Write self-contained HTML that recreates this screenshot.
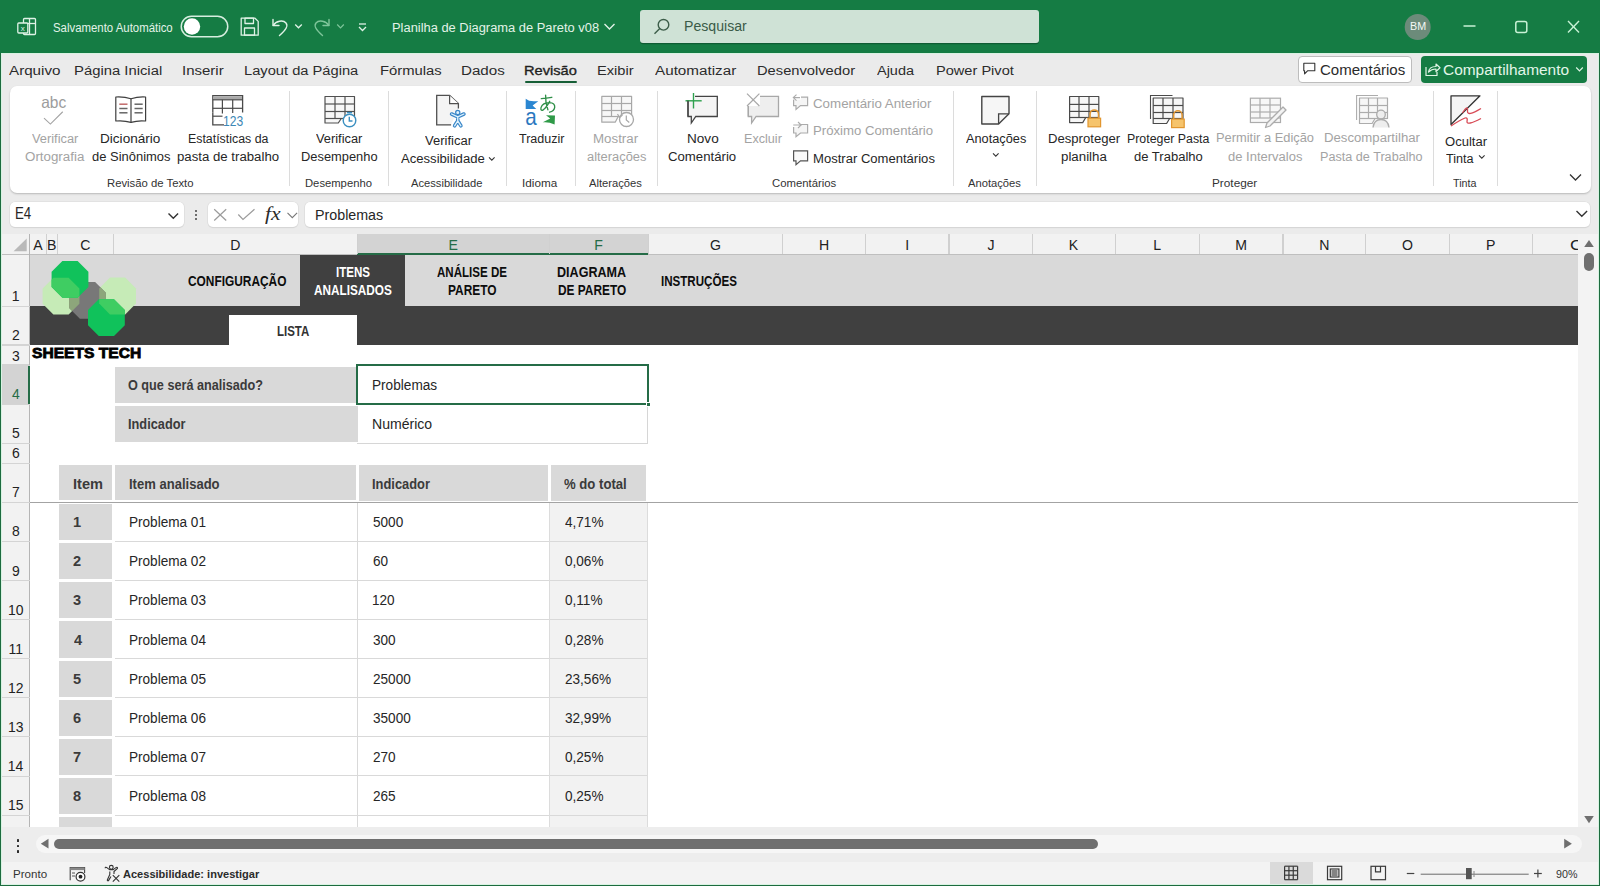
<!DOCTYPE html>
<html><head><meta charset="utf-8"><style>
html,body{margin:0;padding:0;width:1600px;height:886px;overflow:hidden;background:#ebebeb;}
body{position:relative;font-family:"Liberation Sans",sans-serif;}
.b{position:absolute;}
.t{position:absolute;white-space:pre;transform-origin:0 0;}
.s{position:absolute;overflow:visible;}
</style></head><body>
<div class="b" style="left:0.00px;top:0.00px;width:1600.00px;height:53.00px;background:#157c44;"></div>
<svg class="s" style="left:17px;top:17px;" width="20" height="20" viewBox="0 0 20 20"><g fill="none" stroke="#dff2e6" stroke-width="1.3">
      <rect x="6.5" y="1.5" width="12" height="16" rx="1"/><line x1="6.5" y1="6.5" x2="18.5" y2="6.5"/><line x1="12.5" y1="1.5" x2="12.5" y2="17.5"/>
    </g><rect x="0.8" y="6" width="10" height="10" rx="1" fill="#157c44" stroke="#dff2e6" stroke-width="1.3"/>
    <text x="5.8" y="14.3" font-family="Liberation Sans" font-size="8" fill="#dff2e6" text-anchor="middle">x</text></svg>
<span class="t" style="left:53.23px;top:21.96px;font-size:12.21px;line-height:12.21px;color:#e3f3e8;font-weight:normal;font-style:normal;font-family:'Liberation Sans',sans-serif;transform:scaleX(0.9336);">Salvamento Automático</span>
<svg class="s" style="left:180px;top:15px;" width="50" height="24" viewBox="0 0 50 24"><rect x="1.25" y="1.25" width="46.5" height="20.5" rx="10.25" fill="none" stroke="#d6eedf" stroke-width="1.5"/><circle cx="12" cy="11.5" r="8.2" fill="#ffffff"/></svg>
<svg class="s" style="left:240px;top:17px;" width="20" height="20" viewBox="0 0 20 20"><g fill="none" stroke="#dff2e6" stroke-width="1.3" stroke-linejoin="round">
      <path d="M1.2 1.2 H15 L18.2 4.4 V18.2 H1.2 Z"/><rect x="5" y="1.2" width="8.5" height="5.3"/><rect x="4.5" y="11" width="10" height="7.2"/></g></svg>
<svg class="s" style="left:271px;top:17px;" width="20" height="20" viewBox="0 0 20 20"><g fill="none" stroke="#dff2e6" stroke-width="1.4" stroke-linecap="round" stroke-linejoin="round">
      <path d="M2 2.5 V8.5 H8"/><path d="M2.3 8.3 C5 4 12 2.5 15 6 C17.5 9 15 13 8.5 18.5"/></g></svg>
<svg class="s" style="left:294px;top:23px;" width="10" height="7" viewBox="0 0 10 7"><path d="M1.2 1.5 L4.5 4.8 L7.8 1.5" fill="none" stroke="#dff2e6" stroke-width="1.3"/></svg>
<svg class="s" style="left:312px;top:17px;" width="20" height="20" viewBox="0 0 20 20"><g fill="none" stroke="#7ec59a" stroke-width="1.4" stroke-linecap="round" stroke-linejoin="round">
      <path d="M17 2.5 V8.5 H11"/><path d="M16.7 8.3 C14 4 7 2.5 4 6 C1.5 9 4 13 10.5 18.5"/></g></svg>
<svg class="s" style="left:336px;top:23px;" width="10" height="7" viewBox="0 0 10 7"><path d="M1.2 1.5 L4.5 4.8 L7.8 1.5" fill="none" stroke="#7ec59a" stroke-width="1.2"/></svg>
<svg class="s" style="left:357px;top:22px;" width="12" height="11" viewBox="0 0 12 11"><g fill="none" stroke="#dff2e6" stroke-width="1.3"><line x1="2" y1="2" x2="9" y2="2"/><path d="M2 5 L5.5 8.5 L9 5"/></g></svg>
<span class="t" style="left:392.44px;top:21.23px;font-size:13.08px;line-height:13.08px;color:#e3f3e8;font-weight:normal;font-style:normal;font-family:'Liberation Sans',sans-serif;transform:scaleX(0.9855);">Planilha de Diagrama de Pareto v08</span>
<svg class="s" style="left:603px;top:22px;" width="14" height="10" viewBox="0 0 14 10"><path d="M1.5 2 L6.5 7 L11.5 2" fill="none" stroke="#dff2e6" stroke-width="1.4"/></svg>
<div class="b" style="left:640.00px;top:10.00px;width:399.00px;height:33.00px;background:#cfe2d6;border-radius:3px;box-shadow:0 1.2px 0 #0f5c33;"></div>
<svg class="s" style="left:653px;top:18px;" width="18" height="18" viewBox="0 0 18 18"><g fill="none" stroke="#3c5d49" stroke-width="1.4"><circle cx="10.5" cy="6.8" r="5.3"/><line x1="6.8" y1="10.5" x2="1.5" y2="15.8"/></g></svg>
<span class="t" style="left:684.44px;top:18.87px;font-size:14.68px;line-height:14.68px;color:#3b5b48;font-weight:normal;font-style:normal;font-family:'Liberation Sans',sans-serif;transform:scaleX(0.9619);">Pesquisar</span>
<svg class="s" style="left:1404px;top:14px;" width="28" height="28" viewBox="0 0 28 28"><circle cx="13.7" cy="13" r="13" fill="#6c8b7a"/></svg>
<span class="t" style="left:1409.72px;top:22.11px;font-size:10.03px;line-height:10.03px;color:#f4f8f5;font-weight:normal;font-style:normal;font-family:'Liberation Sans',sans-serif;transform:scaleX(1.0731);">BM</span>
<svg class="s" style="left:1462px;top:24px;" width="16" height="4" viewBox="0 0 16 4"><line x1="1.5" y1="2" x2="13.5" y2="2" stroke="#c9f2d6" stroke-width="1.5"/></svg>
<svg class="s" style="left:1514px;top:20px;" width="16" height="15" viewBox="0 0 16 15"><rect x="1.8" y="1.5" width="11" height="11" rx="2" fill="none" stroke="#c9f2d6" stroke-width="1.5"/></svg>
<svg class="s" style="left:1566px;top:19px;" width="16" height="16" viewBox="0 0 16 16"><g stroke="#c9f2d6" stroke-width="1.4"><line x1="2" y1="2" x2="13" y2="13.5"/><line x1="13" y1="2" x2="2" y2="13.5"/></g></svg>
<div class="b" style="left:2.00px;top:53.00px;width:1596.00px;height:33.00px;background:#ebebeb;"></div>
<div class="b" style="left:2.00px;top:53.00px;width:1596.00px;height:1.00px;background:#d9f2e2;"></div>
<span class="t" style="left:8.77px;top:64.46px;font-size:13.52px;line-height:13.52px;color:#2b2b2b;font-weight:normal;font-style:normal;font-family:'Liberation Sans',sans-serif;transform:scaleX(1.1232);">Arquivo</span>
<span class="t" style="left:73.78px;top:64.46px;font-size:13.52px;line-height:13.52px;color:#2b2b2b;font-weight:normal;font-style:normal;font-family:'Liberation Sans',sans-serif;transform:scaleX(1.0969);">Página Inicial</span>
<span class="t" style="left:181.62px;top:64.46px;font-size:13.52px;line-height:13.52px;color:#2b2b2b;font-weight:normal;font-style:normal;font-family:'Liberation Sans',sans-serif;transform:scaleX(1.1083);">Inserir</span>
<span class="t" style="left:244.20px;top:64.46px;font-size:13.52px;line-height:13.52px;color:#2b2b2b;font-weight:normal;font-style:normal;font-family:'Liberation Sans',sans-serif;transform:scaleX(1.0863);">Layout da Página</span>
<span class="t" style="left:380.29px;top:64.46px;font-size:13.52px;line-height:13.52px;color:#2b2b2b;font-weight:normal;font-style:normal;font-family:'Liberation Sans',sans-serif;transform:scaleX(1.0960);">Fórmulas</span>
<span class="t" style="left:460.76px;top:64.46px;font-size:13.52px;line-height:13.52px;color:#2b2b2b;font-weight:normal;font-style:normal;font-family:'Liberation Sans',sans-serif;transform:scaleX(1.1209);">Dados</span>
<span class="t" style="left:596.60px;top:64.46px;font-size:13.52px;line-height:13.52px;color:#2b2b2b;font-weight:normal;font-style:normal;font-family:'Liberation Sans',sans-serif;transform:scaleX(1.0841);">Exibir</span>
<span class="t" style="left:654.67px;top:64.46px;font-size:13.52px;line-height:13.52px;color:#2b2b2b;font-weight:normal;font-style:normal;font-family:'Liberation Sans',sans-serif;transform:scaleX(1.1272);">Automatizar</span>
<span class="t" style="left:756.59px;top:64.46px;font-size:13.52px;line-height:13.52px;color:#2b2b2b;font-weight:normal;font-style:normal;font-family:'Liberation Sans',sans-serif;transform:scaleX(1.0874);">Desenvolvedor</span>
<span class="t" style="left:876.97px;top:64.46px;font-size:13.52px;line-height:13.52px;color:#2b2b2b;font-weight:normal;font-style:normal;font-family:'Liberation Sans',sans-serif;transform:scaleX(1.0709);">Ajuda</span>
<span class="t" style="left:935.80px;top:64.46px;font-size:13.52px;line-height:13.52px;color:#2b2b2b;font-weight:normal;font-style:normal;font-family:'Liberation Sans',sans-serif;transform:scaleX(1.0788);">Power Pivot</span>
<span class="t" style="left:523.80px;top:64.46px;font-size:13.52px;line-height:13.52px;color:#1f1f1f;font-weight:normal;font-style:normal;font-family:'Liberation Sans',sans-serif;transform:scaleX(1.0817);-webkit-text-stroke:0.35px #1f1f1f;">Revisão</span>
<div class="b" style="left:525.00px;top:81.00px;width:52.00px;height:2.00px;background:#175f37;border-radius:1.2px;"></div>
<div class="b" style="left:1298.00px;top:56.00px;width:114.00px;height:27.00px;background:#ffffff;border:1px solid #bdbdbd;border-radius:4px;box-sizing:border-box;"></div>
<svg class="s" style="left:1302px;top:62px;" width="15" height="14" viewBox="0 0 15 14"><path d="M1.8 1.2 H12.8 V8.8 H5.5 L2.6 11.8 V8.8 H1.8 Z" fill="none" stroke="#333" stroke-width="1.1" stroke-linejoin="round"/></svg>
<span class="t" style="left:1319.75px;top:61.58px;font-size:15.26px;line-height:15.26px;color:#2b2b2b;font-weight:normal;font-style:normal;font-family:'Liberation Sans',sans-serif;transform:scaleX(0.9860);">Comentários</span>
<div class="b" style="left:1421.00px;top:56.00px;width:166.00px;height:27.00px;background:#157c44;border-radius:4px;"></div>
<svg class="s" style="left:1424px;top:61px;" width="18" height="16" viewBox="0 0 18 16"><g fill="none" stroke="#dff5e5" stroke-width="1.2" stroke-linejoin="round"><path d="M2 6 V14.5 H13 V11"/><path d="M4.5 11 C5 7 8 5.5 12 5.5 V3 L16 6.8 L12 10.5 V8 C9 8 6.5 9 4.5 11 Z"/></g></svg>
<span class="t" style="left:1443.03px;top:61.58px;font-size:15.26px;line-height:15.26px;color:#e3f6e9;font-weight:normal;font-style:normal;font-family:'Liberation Sans',sans-serif;transform:scaleX(1.0115);">Compartilhamento</span>
<svg class="s" style="left:1575px;top:66px;" width="10" height="7" viewBox="0 0 10 7"><path d="M1.2 1.5 L4.5 4.8 L7.8 1.5" fill="none" stroke="#dff5e5" stroke-width="1.2"/></svg>
<div class="b" style="left:10.00px;top:86.00px;width:1581.00px;height:107.00px;background:#ffffff;border-radius:7px;box-shadow:0 1px 2px rgba(0,0,0,0.22);"></div>
<div class="b" style="left:289.00px;top:91.00px;width:1.00px;height:95.00px;background:#dcdcdc;"></div>
<div class="b" style="left:388.00px;top:91.00px;width:1.00px;height:95.00px;background:#dcdcdc;"></div>
<div class="b" style="left:506.00px;top:91.00px;width:1.00px;height:95.00px;background:#dcdcdc;"></div>
<div class="b" style="left:575.00px;top:91.00px;width:1.00px;height:95.00px;background:#dcdcdc;"></div>
<div class="b" style="left:657.00px;top:91.00px;width:1.00px;height:95.00px;background:#dcdcdc;"></div>
<div class="b" style="left:953.00px;top:91.00px;width:1.00px;height:95.00px;background:#dcdcdc;"></div>
<div class="b" style="left:1036.00px;top:91.00px;width:1.00px;height:95.00px;background:#dcdcdc;"></div>
<div class="b" style="left:1433.00px;top:91.00px;width:1.00px;height:95.00px;background:#dcdcdc;"></div>
<div class="b" style="left:1497.00px;top:91.00px;width:1.00px;height:95.00px;background:#dcdcdc;"></div>
<span class="t" style="left:31.65px;top:131.93px;font-size:13.08px;line-height:13.08px;color:#a3a3a3;font-weight:normal;font-style:normal;font-family:'Liberation Sans',sans-serif;transform:scaleX(0.9811);">Verificar</span>
<span class="t" style="left:25.16px;top:149.93px;font-size:13.08px;line-height:13.08px;color:#a3a3a3;font-weight:normal;font-style:normal;font-family:'Liberation Sans',sans-serif;transform:scaleX(1.0203);">Ortografia</span>
<span class="t" style="left:100.39px;top:131.93px;font-size:13.08px;line-height:13.08px;color:#262626;font-weight:normal;font-style:normal;font-family:'Liberation Sans',sans-serif;transform:scaleX(1.0382);">Dicionário</span>
<span class="t" style="left:92.16px;top:149.93px;font-size:13.08px;line-height:13.08px;color:#262626;font-weight:normal;font-style:normal;font-family:'Liberation Sans',sans-serif;transform:scaleX(0.9904);">de Sinônimos</span>
<span class="t" style="left:187.59px;top:131.93px;font-size:13.08px;line-height:13.08px;color:#262626;font-weight:normal;font-style:normal;font-family:'Liberation Sans',sans-serif;transform:scaleX(0.9454);">Estatísticas da</span>
<span class="t" style="left:177.15px;top:149.93px;font-size:13.08px;line-height:13.08px;color:#262626;font-weight:normal;font-style:normal;font-family:'Liberation Sans',sans-serif;transform:scaleX(1.0100);">pasta de trabalho</span>
<span class="t" style="left:316.45px;top:131.93px;font-size:13.08px;line-height:13.08px;color:#262626;font-weight:normal;font-style:normal;font-family:'Liberation Sans',sans-serif;transform:scaleX(0.9811);">Verificar</span>
<span class="t" style="left:300.94px;top:149.93px;font-size:13.08px;line-height:13.08px;color:#262626;font-weight:normal;font-style:normal;font-family:'Liberation Sans',sans-serif;transform:scaleX(0.9844);">Desempenho</span>
<span class="t" style="left:424.85px;top:134.23px;font-size:13.08px;line-height:13.08px;color:#262626;font-weight:normal;font-style:normal;font-family:'Liberation Sans',sans-serif;transform:scaleX(0.9939);">Verificar</span>
<span class="t" style="left:400.72px;top:151.93px;font-size:13.08px;line-height:13.08px;color:#262626;font-weight:normal;font-style:normal;font-family:'Liberation Sans',sans-serif;transform:scaleX(1.0016);">Acessibilidade</span>
<span class="t" style="left:519.12px;top:131.53px;font-size:13.08px;line-height:13.08px;color:#262626;font-weight:normal;font-style:normal;font-family:'Liberation Sans',sans-serif;transform:scaleX(0.9577);">Traduzir</span>
<span class="t" style="left:593.01px;top:131.93px;font-size:13.08px;line-height:13.08px;color:#a3a3a3;font-weight:normal;font-style:normal;font-family:'Liberation Sans',sans-serif;transform:scaleX(1.0177);">Mostrar</span>
<span class="t" style="left:587.16px;top:149.83px;font-size:13.08px;line-height:13.08px;color:#a3a3a3;font-weight:normal;font-style:normal;font-family:'Liberation Sans',sans-serif;transform:scaleX(0.9842);">alterações</span>
<span class="t" style="left:686.69px;top:131.68px;font-size:13.08px;line-height:13.08px;color:#262626;font-weight:normal;font-style:normal;font-family:'Liberation Sans',sans-serif;transform:scaleX(1.0377);">Novo</span>
<span class="t" style="left:668.34px;top:149.93px;font-size:13.08px;line-height:13.08px;color:#262626;font-weight:normal;font-style:normal;font-family:'Liberation Sans',sans-serif;transform:scaleX(1.0090);">Comentário</span>
<span class="t" style="left:743.97px;top:131.68px;font-size:13.08px;line-height:13.08px;color:#a3a3a3;font-weight:normal;font-style:normal;font-family:'Liberation Sans',sans-serif;transform:scaleX(0.9641);">Excluir</span>
<span class="t" style="left:813.33px;top:96.63px;font-size:13.08px;line-height:13.08px;color:#a3a3a3;font-weight:normal;font-style:normal;font-family:'Liberation Sans',sans-serif;transform:scaleX(1.0186);">Comentário Anterior</span>
<span class="t" style="left:812.92px;top:123.83px;font-size:13.08px;line-height:13.08px;color:#a3a3a3;font-weight:normal;font-style:normal;font-family:'Liberation Sans',sans-serif;transform:scaleX(1.0076);">Próximo Comentário</span>
<span class="t" style="left:812.93px;top:151.93px;font-size:13.08px;line-height:13.08px;color:#262626;font-weight:normal;font-style:normal;font-family:'Liberation Sans',sans-serif;transform:scaleX(0.9985);">Mostrar Comentários</span>
<span class="t" style="left:965.67px;top:131.53px;font-size:13.08px;line-height:13.08px;color:#262626;font-weight:normal;font-style:normal;font-family:'Liberation Sans',sans-serif;transform:scaleX(0.9751);">Anotações</span>
<span class="t" style="left:1048.02px;top:131.53px;font-size:13.08px;line-height:13.08px;color:#262626;font-weight:normal;font-style:normal;font-family:'Liberation Sans',sans-serif;transform:scaleX(1.0029);">Desproteger</span>
<span class="t" style="left:1061.05px;top:149.53px;font-size:13.08px;line-height:13.08px;color:#262626;font-weight:normal;font-style:normal;font-family:'Liberation Sans',sans-serif;transform:scaleX(1.0165);">planilha</span>
<span class="t" style="left:1126.89px;top:131.53px;font-size:13.08px;line-height:13.08px;color:#262626;font-weight:normal;font-style:normal;font-family:'Liberation Sans',sans-serif;transform:scaleX(0.9445);">Proteger Pasta</span>
<span class="t" style="left:1134.35px;top:149.53px;font-size:13.08px;line-height:13.08px;color:#262626;font-weight:normal;font-style:normal;font-family:'Liberation Sans',sans-serif;transform:scaleX(0.9956);">de Trabalho</span>
<span class="t" style="left:1216.24px;top:131.33px;font-size:13.08px;line-height:13.08px;color:#a3a3a3;font-weight:normal;font-style:normal;font-family:'Liberation Sans',sans-serif;transform:scaleX(0.9844);">Permitir a Edição</span>
<span class="t" style="left:1228.05px;top:149.83px;font-size:13.08px;line-height:13.08px;color:#a3a3a3;font-weight:normal;font-style:normal;font-family:'Liberation Sans',sans-serif;transform:scaleX(0.9935);">de Intervalos</span>
<span class="t" style="left:1323.52px;top:131.33px;font-size:13.08px;line-height:13.08px;color:#a3a3a3;font-weight:normal;font-style:normal;font-family:'Liberation Sans',sans-serif;transform:scaleX(1.0074);">Descompartilhar</span>
<span class="t" style="left:1320.46px;top:149.83px;font-size:13.08px;line-height:13.08px;color:#a3a3a3;font-weight:normal;font-style:normal;font-family:'Liberation Sans',sans-serif;transform:scaleX(0.9661);">Pasta de Trabalho</span>
<span class="t" style="left:1445.07px;top:134.53px;font-size:13.08px;line-height:13.08px;color:#262626;font-weight:normal;font-style:normal;font-family:'Liberation Sans',sans-serif;transform:scaleX(0.9973);">Ocultar</span>
<span class="t" style="left:1445.72px;top:151.63px;font-size:13.08px;line-height:13.08px;color:#262626;font-weight:normal;font-style:normal;font-family:'Liberation Sans',sans-serif;transform:scaleX(0.9644);">Tinta</span>
<span class="t" style="left:107.07px;top:177.65px;font-size:11.05px;line-height:11.05px;color:#333333;font-weight:normal;font-style:normal;font-family:'Liberation Sans',sans-serif;transform:scaleX(1.0234);">Revisão de Texto</span>
<span class="t" style="left:304.58px;top:177.65px;font-size:11.05px;line-height:11.05px;color:#333333;font-weight:normal;font-style:normal;font-family:'Liberation Sans',sans-serif;transform:scaleX(1.0181);">Desempenho</span>
<span class="t" style="left:411.23px;top:177.65px;font-size:11.05px;line-height:11.05px;color:#333333;font-weight:normal;font-style:normal;font-family:'Liberation Sans',sans-serif;transform:scaleX(1.0107);">Acessibilidade</span>
<span class="t" style="left:522.22px;top:177.65px;font-size:11.05px;line-height:11.05px;color:#333333;font-weight:normal;font-style:normal;font-family:'Liberation Sans',sans-serif;transform:scaleX(1.0608);">Idioma</span>
<span class="t" style="left:588.88px;top:177.65px;font-size:11.05px;line-height:11.05px;color:#333333;font-weight:normal;font-style:normal;font-family:'Liberation Sans',sans-serif;transform:scaleX(1.0142);">Alterações</span>
<span class="t" style="left:772.18px;top:177.65px;font-size:11.05px;line-height:11.05px;color:#333333;font-weight:normal;font-style:normal;font-family:'Liberation Sans',sans-serif;transform:scaleX(1.0258);">Comentários</span>
<span class="t" style="left:967.73px;top:177.65px;font-size:11.05px;line-height:11.05px;color:#333333;font-weight:normal;font-style:normal;font-family:'Liberation Sans',sans-serif;transform:scaleX(1.0138);">Anotações</span>
<span class="t" style="left:1211.63px;top:177.65px;font-size:11.05px;line-height:11.05px;color:#333333;font-weight:normal;font-style:normal;font-family:'Liberation Sans',sans-serif;transform:scaleX(1.0686);">Proteger</span>
<span class="t" style="left:1453.46px;top:177.65px;font-size:11.05px;line-height:11.05px;color:#333333;font-weight:normal;font-style:normal;font-family:'Liberation Sans',sans-serif;transform:scaleX(0.9705);">Tinta</span>
<svg class="s" style="left:487.5px;top:156px;" width="8" height="6" viewBox="0 0 8 6"><path d="M1 1.3 L3.8 4.1 L6.6 1.3" fill="none" stroke="#333" stroke-width="1.1"/></svg>
<svg class="s" style="left:991.5px;top:152px;" width="8" height="6" viewBox="0 0 8 6"><path d="M1 1.3 L3.8 4.1 L6.6 1.3" fill="none" stroke="#333" stroke-width="1.1"/></svg>
<svg class="s" style="left:1478px;top:154.2px;" width="8" height="6" viewBox="0 0 8 6"><path d="M1 1.3 L3.8 4.1 L6.6 1.3" fill="none" stroke="#333" stroke-width="1.1"/></svg>
<svg class="s" style="left:0;top:0" width="1600" height="200"><text x="41.2" y="107.6" font-family="Liberation Sans" font-size="16.5" fill="#9c9c9c" textLength="25" lengthAdjust="spacingAndGlyphs">abc</text><path d="M44 118.1 L50.4 124.1 L62.75 111.75" fill="none" stroke="#a3a3a3" stroke-width="1.1"/><g fill="none" stroke="#3f3f3f" stroke-width="1.2" stroke-linejoin="round"><path d="M115.8 97 Q124 96.5 131 98.8 Q138 96.5 145.6 97 V121 Q138 120.2 131 122.4 Q124 120.2 115.8 121 Z"/><line x1="131" y1="98.8" x2="131" y2="122.4"/></g><g stroke-width="1.5"><line x1="119.3" y1="104.2" x2="127.5" y2="104.2" stroke="#c26a6a"/><line x1="119.3" y1="108.5" x2="127.5" y2="108.5" stroke="#666"/><line x1="119.3" y1="112.8" x2="127.5" y2="112.8" stroke="#666"/><line x1="134.5" y1="104.2" x2="142.7" y2="104.2" stroke="#666"/><line x1="134.5" y1="108.5" x2="142.7" y2="108.5" stroke="#666"/><line x1="134.5" y1="112.8" x2="142.7" y2="112.8" stroke="#666"/></g><path d="M212.8 112.5 V124.8 H224" fill="none" stroke="#4a4a4a" stroke-width="1.3"/><path d="M212.8 112.5 V95.6 H242.6 V112.5" fill="none" stroke="#4a4a4a" stroke-width="1.3"/><rect x="213.4" y="96.3" width="28.6" height="3.2" fill="#a9a9a9"/><g stroke="#4a4a4a" stroke-width="1.2"><line x1="212.8" y1="99.8" x2="242.6" y2="99.8"/><line x1="222.4" y1="99.8" x2="222.4" y2="113.5"/><line x1="232.7" y1="99.8" x2="232.7" y2="113"/><line x1="212.8" y1="108.3" x2="242.6" y2="108.3"/><line x1="212.8" y1="116.2" x2="222.5" y2="116.2"/></g><text x="223" y="125.5" font-family="Liberation Sans" font-size="15.5" fill="#3d87b5" textLength="20.2" lengthAdjust="spacingAndGlyphs">123</text><path d="M325 96.5 H354.5 V118.5 H341.275 L338.275 123 H325 Z" fill="#f7f7f7" stroke="#505050" stroke-width="1.2" stroke-linejoin="round"/><line x1="335" y1="96.5" x2="335" y2="118.5" stroke="#505050" stroke-width="1.2"/><line x1="345" y1="96.5" x2="345" y2="118.5" stroke="#505050" stroke-width="1.2"/><line x1="325" y1="104" x2="354.5" y2="104" stroke="#505050" stroke-width="1.2"/><line x1="325" y1="111.5" x2="354.5" y2="111.5" stroke="#505050" stroke-width="1.2"/><line x1="325" y1="118.5" x2="354.5" y2="118.5" stroke="#505050" stroke-width="1.2"/><circle cx="349.5" cy="120.5" r="6.3" fill="#fff" stroke="#3a8fc0" stroke-width="1.4"/><path d="M349.3 116.8 V121 H352.5" fill="none" stroke="#3a8fc0" stroke-width="1.4"/><line x1="347" y1="112.6" x2="352" y2="112.6" stroke="#3a8fc0" stroke-width="1.4"/><path d="M451.1 124.8 H436.7 V95.4 H449.6 L458.4 103.6 V108.5" fill="#f4f4f4" stroke="#505050" stroke-width="1.3" stroke-linejoin="miter"/><path d="M449.6 95.4 V103.6 H458.4" fill="#fff" stroke="#505050" stroke-width="1.2"/><path d="M451.6 114 L457.75 116.8 L463.9 114 M457.75 116.8 V120.8 L454.6 125.8 M457.75 120.8 L460.9 125.8" fill="none" stroke="#3a87c8" stroke-width="3.6" stroke-linecap="round" stroke-linejoin="round"/><path d="M451.6 114 L457.75 116.8 L463.9 114 M457.75 116.8 V120.8 L454.6 125.8 M457.75 120.8 L460.9 125.8" fill="none" stroke="#dff2fd" stroke-width="1.3" stroke-linecap="round" stroke-linejoin="round"/><circle cx="457.75" cy="112.4" r="2.1" fill="#dff2fd" stroke="#3a87c8" stroke-width="1.2"/><path d="M525.7 98.7 L529.1 100.7 Q534 101.3 538.3 101.3 L532.6 105.4 L536.3 108.9 H525.7 Z" fill="#2b86d1"/><text x="525.2" y="124.9" font-family="Liberation Sans" font-size="24" fill="#2b78c0" textLength="11.5" lengthAdjust="spacingAndGlyphs">a</text><path d="M541.3 98.6 Q546 98.3 551.8 97.3 M545.6 95.2 Q545.3 103 547.9 109.8 M549.7 101.3 Q546.2 107.6 543.3 109.8 Q540.3 111.4 541 107.6 Q542.6 102.6 549.5 102.6 Q555.2 102.9 554.7 107.3 Q554.1 111 549.6 112.2" fill="none" stroke="#2f8f48" stroke-width="1.35" stroke-linecap="round" stroke-linejoin="round"/><path d="M555 115.4 L546 115.2 L550.2 118.6 L542.8 122.3 Q548.5 121.6 554.6 124.5 Z" fill="#2f9a48"/><path d="M601.8 96.4 H631.6 V116.5 H618.21 L615.21 122.2 H601.8 Z" fill="#f7f7f7" stroke="#a8a8a8" stroke-width="1.2" stroke-linejoin="round"/><line x1="611.5" y1="96.4" x2="611.5" y2="116.5" stroke="#a8a8a8" stroke-width="1.2"/><line x1="621.5" y1="96.4" x2="621.5" y2="116.5" stroke="#a8a8a8" stroke-width="1.2"/><line x1="601.8" y1="103.5" x2="631.6" y2="103.5" stroke="#a8a8a8" stroke-width="1.2"/><line x1="601.8" y1="110.5" x2="631.6" y2="110.5" stroke="#a8a8a8" stroke-width="1.2"/><line x1="601.8" y1="116.5" x2="631.6" y2="116.5" stroke="#a8a8a8" stroke-width="1.2"/><circle cx="626.5" cy="119.5" r="7" fill="#fff" stroke="#a8a8a8" stroke-width="1.3"/><path d="M626.3 115.5 V120 L629.3 122.5" fill="none" stroke="#a8a8a8" stroke-width="1.2"/><path d="M617.5 114 L619.5 117.5 L622.5 115" fill="none" stroke="#a8a8a8" stroke-width="1.2"/><path d="M688 96.4 H717.3 V116.5 H695.8 L691.3 123 V116.5 H688 Z" fill="#f4f4f4" stroke="#444" stroke-width="1.3" stroke-linejoin="miter"/><rect x="685" y="93" width="10" height="7" fill="#fff"/><g stroke="#2ea14f" stroke-width="1.4"><line x1="693.5" y1="93" x2="693.5" y2="108.5"/><line x1="685.5" y1="100.8" x2="701.7" y2="100.8"/></g><path d="M688 100.8 V116.5" stroke="#444" stroke-width="1.3"/><path d="M748.3 96.4 H778.5 V116.5 H756.1 L751.6 123 V116.5 H748.3 Z" fill="#eeeeee" stroke="#a8a8a8" stroke-width="1.3" stroke-linejoin="miter"/><rect x="746" y="93" width="14" height="13" fill="#fff"/><g stroke="#a8a8a8" stroke-width="1.2"><line x1="747" y1="93.6" x2="759.4" y2="106"/><line x1="759.4" y1="93.6" x2="747" y2="106"/></g><line x1="748.3" y1="106" x2="748.3" y2="116.5" stroke="#a8a8a8" stroke-width="1.3"/><path d="M793.6 97.1 H807.6 V105.6 H800.5 L796 109.39999999999999 V105.6 H793.6 Z" fill="#f5f5f5" stroke="#ababab" stroke-width="1.2" stroke-linejoin="miter"/><rect x="792" y="94.6" width="9" height="5" fill="#fff"/><path d="M800 97.6 H793.3 M796.5 94.6 L793.3 97.6 L796.5 100.6" fill="none" stroke="#ababab" stroke-width="1.1"/><path d="M793.6 124.5 H807.6 V133 H800.5 L796 136.8 V133 H793.6 Z" fill="#f5f5f5" stroke="#ababab" stroke-width="1.2" stroke-linejoin="miter"/><rect x="792" y="122" width="9" height="5" fill="#fff"/><path d="M793.3 125 H801 M798 122 L801.2 125 L798 128" fill="none" stroke="#ababab" stroke-width="1.1"/><path d="M793.6 150.8 H807.6 V160.8 H800.5 L796 164.60000000000002 V160.8 H793.6 Z" fill="#fafafa" stroke="#555" stroke-width="1.2" stroke-linejoin="miter"/><path d="M981.8 96.5 H1009 V113.8 L998.6 124 H981.8 Z" fill="#f6f6f6" stroke="#444" stroke-width="1.4" stroke-linejoin="round"/><path d="M998.6 124 V113.8 H1009" fill="none" stroke="#444" stroke-width="1.3"/><path d="M1069.6 96.5 H1098.8 V117.5 H1085.74 L1082.74 122.6 H1069.6 Z" fill="#f7f7f7" stroke="#4a4a4a" stroke-width="1.2" stroke-linejoin="round"/><line x1="1079" y1="96.5" x2="1079" y2="117.5" stroke="#4a4a4a" stroke-width="1.2"/><line x1="1089" y1="96.5" x2="1089" y2="117.5" stroke="#4a4a4a" stroke-width="1.2"/><line x1="1069.6" y1="104.4" x2="1098.8" y2="104.4" stroke="#4a4a4a" stroke-width="1.2"/><line x1="1069.6" y1="111.4" x2="1098.8" y2="111.4" stroke="#4a4a4a" stroke-width="1.2"/><line x1="1069.6" y1="117.5" x2="1098.8" y2="117.5" stroke="#4a4a4a" stroke-width="1.2"/><path d="M1090.1000000000001 118.6 V114.1 A4.2 4.2 0 0 1 1098.5000000000002 114.1 V118.6" fill="none" stroke="#e2962f" stroke-width="1.5"/><rect x="1088.0" y="118.19999999999999" width="12.599999999999955" height="8.600000000000012" fill="#f6c46c" stroke="#e2962f" stroke-width="1.2"/><path d="M1150.5 119 V95.5 H1172.5" fill="none" stroke="#4a4a4a" stroke-width="1.1"/><path d="M1153.2 98 H1183 V118.5 H1169.6100000000001 L1166.6100000000001 123.5 H1153.2 Z" fill="#f7f7f7" stroke="#4a4a4a" stroke-width="1.2" stroke-linejoin="round"/><line x1="1163" y1="98" x2="1163" y2="118.5" stroke="#4a4a4a" stroke-width="1.2"/><line x1="1173" y1="98" x2="1173" y2="118.5" stroke="#4a4a4a" stroke-width="1.2"/><line x1="1153.2" y1="105.5" x2="1183" y2="105.5" stroke="#4a4a4a" stroke-width="1.2"/><line x1="1153.2" y1="112.5" x2="1183" y2="112.5" stroke="#4a4a4a" stroke-width="1.2"/><line x1="1153.2" y1="118.5" x2="1183" y2="118.5" stroke="#4a4a4a" stroke-width="1.2"/><path d="M1173.7 119.5 V115.0 A4.2 4.2 0 0 1 1182.1000000000001 115.0 V119.5" fill="none" stroke="#e2962f" stroke-width="1.5"/><rect x="1171.6" y="119.1" width="12.599999999999955" height="8.49999999999999" fill="#f6c46c" stroke="#e2962f" stroke-width="1.2"/><rect x="1250.4" y="98.2" width="30.09999999999991" height="24.299999999999997" fill="#f7f7f7" stroke="#acacac" stroke-width="1.2"/><line x1="1260" y1="98.2" x2="1260" y2="118" stroke="#acacac" stroke-width="1.2"/><line x1="1270" y1="98.2" x2="1270" y2="118" stroke="#acacac" stroke-width="1.2"/><line x1="1250.4" y1="105" x2="1280.5" y2="105" stroke="#acacac" stroke-width="1.2"/><line x1="1250.4" y1="112" x2="1280.5" y2="112" stroke="#acacac" stroke-width="1.2"/><line x1="1250.4" y1="118" x2="1280.5" y2="118" stroke="#acacac" stroke-width="1.2"/><path d="M1283 107 L1286 110 L1270 126 L1265.5 127.5 L1267 123 Z" fill="#f3f3f3" stroke="#acacac" stroke-width="1.3" stroke-linejoin="round"/><path d="M1356.6 120 V95.5 H1378" fill="none" stroke="#acacac" stroke-width="1.1"/><path d="M1359.5 98 H1387.5 V118.5 H1375.1 L1372.1 123.5 H1359.5 Z" fill="#f7f7f7" stroke="#acacac" stroke-width="1.2" stroke-linejoin="round"/><line x1="1368.5" y1="98" x2="1368.5" y2="118.5" stroke="#acacac" stroke-width="1.2"/><line x1="1377.5" y1="98" x2="1377.5" y2="118.5" stroke="#acacac" stroke-width="1.2"/><line x1="1359.5" y1="105.5" x2="1387.5" y2="105.5" stroke="#acacac" stroke-width="1.2"/><line x1="1359.5" y1="112.5" x2="1387.5" y2="112.5" stroke="#acacac" stroke-width="1.2"/><line x1="1359.5" y1="118.5" x2="1387.5" y2="118.5" stroke="#acacac" stroke-width="1.2"/><circle cx="1381" cy="114.5" r="4.3" fill="#eee" stroke="#acacac" stroke-width="1.3"/><path d="M1373 127.5 Q1374 119.5 1381 119.5 Q1388 119.5 1389 127.5" fill="#eee" stroke="#acacac" stroke-width="1.3"/><path d="M1451 95.8 H1480 L1451 124.5 Z" fill="#f4f4f4" stroke="#333" stroke-width="1.3" stroke-linejoin="round"/><path d="M1462.5 113 Q1468 104 1467.5 111 Q1467 117 1481 108.5" fill="none" stroke="#d84a55" stroke-width="1.3"/><path d="M1451 126 Q1460 120 1465 118 Q1468 117 1467 121.5 Q1466.5 126 1481 118.5" fill="none" stroke="#d84a55" stroke-width="1.3"/></svg>
<svg class="s" style="left:1568px;top:172px;" width="16" height="11" viewBox="0 0 16 11"><path d="M2 2.5 L7.5 8 L13 2.5" fill="none" stroke="#333" stroke-width="1.3"/></svg>
<div class="b" style="left:10.00px;top:202.00px;width:174.00px;height:25.00px;background:#ffffff;border-radius:5px;box-shadow:0 0 0 0.6px #dadada, 0 1px 1px rgba(0,0,0,0.12);"></div>
<span class="t" style="left:15.11px;top:206.39px;font-size:15.84px;line-height:15.84px;color:#262626;font-weight:normal;font-style:normal;font-family:'Liberation Sans',sans-serif;transform:scaleX(0.8386);">E4</span>
<svg class="s" style="left:167px;top:211px;" width="13" height="10" viewBox="0 0 13 10"><path d="M1.5 2.5 L6.3 7.3 L11.1 2.5" fill="none" stroke="#333" stroke-width="1.4"/></svg>
<div class="b" style="left:195.00px;top:210.00px;width:2.00px;height:2.00px;background:#444;border-radius:1px;"></div>
<div class="b" style="left:195.00px;top:214.00px;width:2.00px;height:2.00px;background:#444;border-radius:1px;"></div>
<div class="b" style="left:195.00px;top:218.00px;width:2.00px;height:2.00px;background:#444;border-radius:1px;"></div>
<div class="b" style="left:208.00px;top:202.00px;width:90.00px;height:25.00px;background:#ffffff;border-radius:5px;box-shadow:0 0 0 0.6px #dadada, 0 1px 1px rgba(0,0,0,0.12);"></div>
<svg class="s" style="left:213px;top:208px;" width="15" height="14" viewBox="0 0 15 14"><g stroke="#9b9b9b" stroke-width="1.2"><line x1="1.2" y1="1.2" x2="13.2" y2="12.5"/><line x1="13.2" y1="1.2" x2="1.2" y2="12.5"/></g></svg>
<svg class="s" style="left:237px;top:208px;" width="20" height="14" viewBox="0 0 20 14"><path d="M1.3 6.5 L6 11.5 L17.5 1.3" fill="none" stroke="#9b9b9b" stroke-width="1.2"/></svg>
<span class="t" style="left:265.04px;top:203.69px;font-size:19.23px;line-height:19.23px;color:#2b2b2b;font-weight:normal;font-style:italic;font-family:'Liberation Serif',serif;transform:scaleX(1.1259);">fx</span>
<svg class="s" style="left:285.5px;top:211px;" width="13" height="9" viewBox="0 0 13 9"><path d="M1.5 1.8 L6.3 6.6 L11.1 1.8" fill="none" stroke="#777" stroke-width="1.1"/></svg>
<div class="b" style="left:305.00px;top:202.00px;width:1285.00px;height:25.00px;background:#ffffff;border-radius:5px;box-shadow:0 0 0 0.6px #dadada, 0 1px 1px rgba(0,0,0,0.12);"></div>
<span class="t" style="left:314.83px;top:207.95px;font-size:14.83px;line-height:14.83px;color:#262626;font-weight:normal;font-style:normal;font-family:'Liberation Sans',sans-serif;transform:scaleX(0.9621);">Problemas</span>
<svg class="s" style="left:1575px;top:209px;" width="14" height="10" viewBox="0 0 14 10"><path d="M1.5 2 L6.8 7.3 L12.1 2" fill="none" stroke="#333" stroke-width="1.4"/></svg>
<div class="b" style="left:2.00px;top:234.00px;width:1576.00px;height:21.00px;background:#f2f2f2;"></div>
<div class="b" style="left:2.00px;top:254.00px;width:1576.00px;height:1.00px;background:#bfbfbf;"></div>
<svg class="s" style="left:13px;top:238px;" width="15" height="15" viewBox="0 0 15 15"><path d="M13.7 0.6 V13.2 H0.6 Z" fill="#b9b9b9"/></svg>
<div class="b" style="left:357.00px;top:234.00px;width:291.00px;height:21.00px;background:#d3d3d3;"></div>
<div class="b" style="left:357.00px;top:253.00px;width:291.00px;height:2.00px;background:#256c47;"></div>
<div class="b" style="left:46.00px;top:234.00px;width:1.00px;height:20.00px;background:#d0d0d0;"></div>
<div class="b" style="left:57.00px;top:234.00px;width:1.00px;height:20.00px;background:#d0d0d0;"></div>
<div class="b" style="left:113.00px;top:234.00px;width:1.00px;height:20.00px;background:#d0d0d0;"></div>
<div class="b" style="left:357.00px;top:234.00px;width:1.00px;height:20.00px;background:#d0d0d0;"></div>
<div class="b" style="left:549.00px;top:234.00px;width:1.00px;height:20.00px;background:#d0d0d0;"></div>
<div class="b" style="left:648.00px;top:234.00px;width:1.00px;height:20.00px;background:#d0d0d0;"></div>
<div class="b" style="left:782.00px;top:234.00px;width:1.00px;height:20.00px;background:#d0d0d0;"></div>
<div class="b" style="left:865.00px;top:234.00px;width:1.00px;height:20.00px;background:#d0d0d0;"></div>
<div class="b" style="left:948.00px;top:234.00px;width:2.00px;height:20.00px;background:#d0d0d0;"></div>
<div class="b" style="left:1032.00px;top:234.00px;width:1.00px;height:20.00px;background:#d0d0d0;"></div>
<div class="b" style="left:1115.00px;top:234.00px;width:1.00px;height:20.00px;background:#d0d0d0;"></div>
<div class="b" style="left:1199.00px;top:234.00px;width:1.00px;height:20.00px;background:#d0d0d0;"></div>
<div class="b" style="left:1282.00px;top:234.00px;width:2.00px;height:20.00px;background:#d0d0d0;"></div>
<div class="b" style="left:1365.00px;top:234.00px;width:1.00px;height:20.00px;background:#d0d0d0;"></div>
<div class="b" style="left:1449.00px;top:234.00px;width:1.00px;height:20.00px;background:#d0d0d0;"></div>
<div class="b" style="left:1532.00px;top:234.00px;width:1.00px;height:20.00px;background:#d0d0d0;"></div>
<span class="t" style="left:33.36px;top:238.37px;font-size:14.10px;line-height:14.10px;color:#222222;font-weight:normal;font-style:normal;font-family:'Liberation Sans',sans-serif;transform:scaleX(1.0000);">A</span>
<span class="t" style="left:46.94px;top:238.37px;font-size:14.10px;line-height:14.10px;color:#222222;font-weight:normal;font-style:normal;font-family:'Liberation Sans',sans-serif;transform:scaleX(1.0000);">B</span>
<span class="t" style="left:80.33px;top:238.37px;font-size:14.10px;line-height:14.10px;color:#222222;font-weight:normal;font-style:normal;font-family:'Liberation Sans',sans-serif;transform:scaleX(1.0000);">C</span>
<span class="t" style="left:230.22px;top:238.37px;font-size:14.10px;line-height:14.10px;color:#222222;font-weight:normal;font-style:normal;font-family:'Liberation Sans',sans-serif;transform:scaleX(1.0000);">D</span>
<span class="t" style="left:448.52px;top:238.37px;font-size:14.10px;line-height:14.10px;color:#256c47;font-weight:normal;font-style:normal;font-family:'Liberation Sans',sans-serif;transform:scaleX(1.0000);">E</span>
<span class="t" style="left:594.19px;top:238.37px;font-size:14.10px;line-height:14.10px;color:#256c47;font-weight:normal;font-style:normal;font-family:'Liberation Sans',sans-serif;transform:scaleX(1.0000);">F</span>
<span class="t" style="left:709.93px;top:238.37px;font-size:14.10px;line-height:14.10px;color:#222222;font-weight:normal;font-style:normal;font-family:'Liberation Sans',sans-serif;transform:scaleX(1.0000);">G</span>
<span class="t" style="left:818.96px;top:238.37px;font-size:14.10px;line-height:14.10px;color:#222222;font-weight:normal;font-style:normal;font-family:'Liberation Sans',sans-serif;transform:scaleX(1.0000);">H</span>
<span class="t" style="left:905.34px;top:238.37px;font-size:14.10px;line-height:14.10px;color:#222222;font-weight:normal;font-style:normal;font-family:'Liberation Sans',sans-serif;transform:scaleX(1.0000);">I</span>
<span class="t" style="left:987.58px;top:238.37px;font-size:14.10px;line-height:14.10px;color:#222222;font-weight:normal;font-style:normal;font-family:'Liberation Sans',sans-serif;transform:scaleX(1.0000);">J</span>
<span class="t" style="left:1068.75px;top:238.37px;font-size:14.10px;line-height:14.10px;color:#222222;font-weight:normal;font-style:normal;font-family:'Liberation Sans',sans-serif;transform:scaleX(1.0000);">K</span>
<span class="t" style="left:1153.18px;top:238.37px;font-size:14.10px;line-height:14.10px;color:#222222;font-weight:normal;font-style:normal;font-family:'Liberation Sans',sans-serif;transform:scaleX(1.0000);">L</span>
<span class="t" style="left:1235.32px;top:238.37px;font-size:14.10px;line-height:14.10px;color:#222222;font-weight:normal;font-style:normal;font-family:'Liberation Sans',sans-serif;transform:scaleX(1.0000);">M</span>
<span class="t" style="left:1319.26px;top:238.37px;font-size:14.10px;line-height:14.10px;color:#222222;font-weight:normal;font-style:normal;font-family:'Liberation Sans',sans-serif;transform:scaleX(1.0000);">N</span>
<span class="t" style="left:1402.07px;top:238.37px;font-size:14.10px;line-height:14.10px;color:#222222;font-weight:normal;font-style:normal;font-family:'Liberation Sans',sans-serif;transform:scaleX(1.0000);">O</span>
<span class="t" style="left:1486.09px;top:238.37px;font-size:14.10px;line-height:14.10px;color:#222222;font-weight:normal;font-style:normal;font-family:'Liberation Sans',sans-serif;transform:scaleX(1.0000);">P</span>
<span class="t" style="left:1570.13px;top:238.37px;font-size:14.10px;line-height:14.10px;color:#222222;font-weight:normal;font-style:normal;font-family:'Liberation Sans',sans-serif;transform:scaleX(1.2306);clip-path:polygon(0 0,7.2px 0,7.2px 100%,0 100%);">C</span>
<div class="b" style="left:1578.00px;top:234.00px;width:20.00px;height:628.00px;background:#f3f3f3;"></div>
<div class="b" style="left:2.00px;top:255.00px;width:28.00px;height:572.00px;background:#f2f2f2;"></div>
<div class="b" style="left:29.00px;top:234.00px;width:1.00px;height:593.00px;background:#b5b5b5;"></div>
<div class="b" style="left:30.00px;top:255.00px;width:1548.00px;height:572.00px;background:#ffffff;"></div>
<div class="b" style="left:2.00px;top:306.00px;width:28.00px;height:1.00px;background:#d4d4d4;"></div>
<div class="b" style="left:2.00px;top:344.00px;width:28.00px;height:2.00px;background:#d4d4d4;"></div>
<div class="b" style="left:2.00px;top:365.00px;width:28.00px;height:1.00px;background:#d4d4d4;"></div>
<div class="b" style="left:2.00px;top:404.00px;width:28.00px;height:1.00px;background:#d4d4d4;"></div>
<div class="b" style="left:2.00px;top:443.00px;width:28.00px;height:1.00px;background:#d4d4d4;"></div>
<div class="b" style="left:2.00px;top:463.00px;width:28.00px;height:1.00px;background:#d4d4d4;"></div>
<div class="b" style="left:2.00px;top:502.00px;width:28.00px;height:1.00px;background:#d4d4d4;"></div>
<div class="b" style="left:2.00px;top:541.00px;width:28.00px;height:1.00px;background:#d4d4d4;"></div>
<div class="b" style="left:2.00px;top:580.00px;width:28.00px;height:1.00px;background:#d4d4d4;"></div>
<div class="b" style="left:2.00px;top:619.00px;width:28.00px;height:1.00px;background:#d4d4d4;"></div>
<div class="b" style="left:2.00px;top:658.00px;width:28.00px;height:1.00px;background:#d4d4d4;"></div>
<div class="b" style="left:2.00px;top:697.00px;width:28.00px;height:1.00px;background:#d4d4d4;"></div>
<div class="b" style="left:2.00px;top:736.00px;width:28.00px;height:1.00px;background:#d4d4d4;"></div>
<div class="b" style="left:2.00px;top:776.00px;width:28.00px;height:1.00px;background:#d4d4d4;"></div>
<div class="b" style="left:2.00px;top:815.00px;width:28.00px;height:1.00px;background:#d4d4d4;"></div>
<div class="b" style="left:2.00px;top:364.00px;width:27.00px;height:40.00px;background:#d3d3d3;"></div>
<div class="b" style="left:28.00px;top:366.00px;width:2.00px;height:38.00px;background:#256c47;"></div>
<span class="t" style="left:11.83px;top:290.09px;font-size:13.95px;line-height:13.95px;color:#222222;font-weight:normal;font-style:normal;font-family:'Liberation Sans',sans-serif;transform:scaleX(1.0000);">1</span>
<span class="t" style="left:12.02px;top:329.09px;font-size:13.95px;line-height:13.95px;color:#222222;font-weight:normal;font-style:normal;font-family:'Liberation Sans',sans-serif;transform:scaleX(1.0000);">2</span>
<span class="t" style="left:12.06px;top:349.59px;font-size:13.95px;line-height:13.95px;color:#222222;font-weight:normal;font-style:normal;font-family:'Liberation Sans',sans-serif;transform:scaleX(1.0000);">3</span>
<span class="t" style="left:12.06px;top:388.39px;font-size:13.95px;line-height:13.95px;color:#256c47;font-weight:normal;font-style:normal;font-family:'Liberation Sans',sans-serif;transform:scaleX(1.0000);">4</span>
<span class="t" style="left:12.03px;top:427.49px;font-size:13.95px;line-height:13.95px;color:#222222;font-weight:normal;font-style:normal;font-family:'Liberation Sans',sans-serif;transform:scaleX(1.0000);">5</span>
<span class="t" style="left:11.98px;top:447.39px;font-size:13.95px;line-height:13.95px;color:#222222;font-weight:normal;font-style:normal;font-family:'Liberation Sans',sans-serif;transform:scaleX(1.0000);">6</span>
<span class="t" style="left:12.01px;top:486.29px;font-size:13.95px;line-height:13.95px;color:#222222;font-weight:normal;font-style:normal;font-family:'Liberation Sans',sans-serif;transform:scaleX(1.0000);">7</span>
<span class="t" style="left:12.02px;top:525.42px;font-size:13.95px;line-height:13.95px;color:#222222;font-weight:normal;font-style:normal;font-family:'Liberation Sans',sans-serif;transform:scaleX(1.0000);">8</span>
<span class="t" style="left:12.03px;top:564.55px;font-size:13.95px;line-height:13.95px;color:#222222;font-weight:normal;font-style:normal;font-family:'Liberation Sans',sans-serif;transform:scaleX(1.0000);">9</span>
<span class="t" style="left:7.88px;top:603.68px;font-size:13.95px;line-height:13.95px;color:#222222;font-weight:normal;font-style:normal;font-family:'Liberation Sans',sans-serif;transform:scaleX(1.0000);">10</span>
<span class="t" style="left:8.46px;top:642.81px;font-size:13.95px;line-height:13.95px;color:#222222;font-weight:normal;font-style:normal;font-family:'Liberation Sans',sans-serif;transform:scaleX(1.0000);">11</span>
<span class="t" style="left:7.96px;top:681.94px;font-size:13.95px;line-height:13.95px;color:#222222;font-weight:normal;font-style:normal;font-family:'Liberation Sans',sans-serif;transform:scaleX(1.0000);">12</span>
<span class="t" style="left:7.92px;top:721.07px;font-size:13.95px;line-height:13.95px;color:#222222;font-weight:normal;font-style:normal;font-family:'Liberation Sans',sans-serif;transform:scaleX(1.0000);">13</span>
<span class="t" style="left:7.81px;top:760.20px;font-size:13.95px;line-height:13.95px;color:#222222;font-weight:normal;font-style:normal;font-family:'Liberation Sans',sans-serif;transform:scaleX(1.0000);">14</span>
<span class="t" style="left:7.90px;top:799.33px;font-size:13.95px;line-height:13.95px;color:#222222;font-weight:normal;font-style:normal;font-family:'Liberation Sans',sans-serif;transform:scaleX(1.0000);">15</span>
<span class="t" style="left:7.92px;top:838.46px;font-size:13.95px;line-height:13.95px;color:#222222;font-weight:normal;font-style:normal;font-family:'Liberation Sans',sans-serif;transform:scaleX(1.0000);">16</span>
<div class="b" style="left:30.00px;top:255.00px;width:1548.00px;height:51.00px;background:#d9d9d9;"></div>
<div class="b" style="left:30.00px;top:306.00px;width:1548.00px;height:39.00px;background:#404040;"></div>
<div class="b" style="left:300.00px;top:255.00px;width:105.00px;height:51.00px;background:#404040;"></div>
<div class="b" style="left:229.00px;top:315.00px;width:128.00px;height:30.00px;background:#ffffff;"></div>
<svg class="s" style="left:0;top:0" width="1600" height="886"><defs>
      <clipPath id="cL"><polygon points="53.38,277.80 68.62,277.80 79.40,288.58 79.40,303.82 68.62,314.60 53.38,314.60 42.60,303.82 42.60,288.58"/></clipPath>
      <clipPath id="cR"><polygon points="109.98,277.60 125.22,277.60 136.00,288.38 136.00,303.62 125.22,314.40 109.98,314.40 99.20,303.62 99.20,288.38"/></clipPath>
    </defs>
    <polygon points="53.38,277.80 68.62,277.80 79.40,288.58 79.40,303.82 68.62,314.60 53.38,314.60 42.60,303.82 42.60,288.58" fill="#c6ebb7"/><polygon points="109.98,277.60 125.22,277.60 136.00,288.38 136.00,303.62 125.22,314.40 109.98,314.40 99.20,303.62 99.20,288.38" fill="#c6ebb7"/>
    <polygon points="79.88,282.00 95.12,282.00 105.90,292.78 105.90,308.02 95.12,318.80 79.88,318.80 69.10,308.02 69.10,292.78" fill="#787878"/>
    <g clip-path="url(#cL)"><polygon points="79.88,282.00 95.12,282.00 105.90,292.78 105.90,308.02 95.12,318.80 79.88,318.80 69.10,308.02 69.10,292.78" fill="#8da67b"/></g>
    <g clip-path="url(#cR)"><polygon points="79.88,282.00 95.12,282.00 105.90,292.78 105.90,308.02 95.12,318.80 79.88,318.80 69.10,308.02 69.10,292.78" fill="#8da67b"/></g>
    <polygon points="62.38,261.00 77.62,261.00 88.40,271.78 88.40,287.02 77.62,297.80 62.38,297.80 51.60,287.02 51.60,271.78" fill="#10c25b"/><polygon points="98.78,299.30 114.02,299.30 124.80,310.08 124.80,325.32 114.02,336.10 98.78,336.10 88.00,325.32 88.00,310.08" fill="#10c25b"/>
    <g clip-path="url(#cL)"><polygon points="62.38,261.00 77.62,261.00 88.40,271.78 88.40,287.02 77.62,297.80 62.38,297.80 51.60,287.02 51.60,271.78" fill="#3fcd62"/></g>
    <g clip-path="url(#cR)"><polygon points="98.78,299.30 114.02,299.30 124.80,310.08 124.80,325.32 114.02,336.10 98.78,336.10 88.00,325.32 88.00,310.08" fill="#3fcd62"/></g></svg>
<span class="t" style="left:188.22px;top:273.67px;font-size:14.68px;line-height:14.68px;color:#0d0d0d;font-weight:bold;font-style:normal;font-family:'Liberation Sans',sans-serif;transform:scaleX(0.8103);">CONFIGURAÇÃO</span>
<span class="t" style="left:335.84px;top:265.20px;font-size:14.53px;line-height:14.53px;color:#ffffff;font-weight:bold;font-style:normal;font-family:'Liberation Sans',sans-serif;transform:scaleX(0.7970);">ITENS</span>
<span class="t" style="left:314.29px;top:282.60px;font-size:14.53px;line-height:14.53px;color:#ffffff;font-weight:bold;font-style:normal;font-family:'Liberation Sans',sans-serif;transform:scaleX(0.8114);">ANALISADOS</span>
<span class="t" style="left:437.10px;top:265.30px;font-size:14.53px;line-height:14.53px;color:#0d0d0d;font-weight:bold;font-style:normal;font-family:'Liberation Sans',sans-serif;transform:scaleX(0.7957);">ANÁLISE DE</span>
<span class="t" style="left:447.91px;top:282.70px;font-size:14.53px;line-height:14.53px;color:#0d0d0d;font-weight:bold;font-style:normal;font-family:'Liberation Sans',sans-serif;transform:scaleX(0.8205);">PARETO</span>
<span class="t" style="left:557.17px;top:265.30px;font-size:14.53px;line-height:14.53px;color:#0d0d0d;font-weight:bold;font-style:normal;font-family:'Liberation Sans',sans-serif;transform:scaleX(0.8651);">DIAGRAMA</span>
<span class="t" style="left:557.72px;top:282.70px;font-size:14.53px;line-height:14.53px;color:#0d0d0d;font-weight:bold;font-style:normal;font-family:'Liberation Sans',sans-serif;transform:scaleX(0.8182);">DE PARETO</span>
<span class="t" style="left:661.03px;top:274.20px;font-size:14.53px;line-height:14.53px;color:#0d0d0d;font-weight:bold;font-style:normal;font-family:'Liberation Sans',sans-serif;transform:scaleX(0.7976);">INSTRUÇÕES</span>
<span class="t" style="left:276.84px;top:324.00px;font-size:14.53px;line-height:14.53px;color:#333333;font-weight:bold;font-style:normal;font-family:'Liberation Sans',sans-serif;transform:scaleX(0.7911);">LISTA</span>
<span class="t" style="left:32.03px;top:345.82px;font-size:14.39px;line-height:14.39px;color:#000000;font-weight:bold;font-style:normal;font-family:'Liberation Sans',sans-serif;transform:scaleX(1.0854);-webkit-text-stroke:0.8px #000;">SHEETS TECH</span>
<div class="b" style="left:115.00px;top:367.00px;width:241.00px;height:36.00px;background:#d9d9d9;"></div>
<div class="b" style="left:115.00px;top:406.00px;width:243.00px;height:36.00px;background:#d9d9d9;"></div>
<span class="t" style="left:128.49px;top:378.25px;font-size:14.83px;line-height:14.83px;color:#3b3b3b;font-weight:bold;font-style:normal;font-family:'Liberation Sans',sans-serif;transform:scaleX(0.8535);">O que será analisado?</span>
<span class="t" style="left:128.46px;top:417.05px;font-size:14.83px;line-height:14.83px;color:#3b3b3b;font-weight:bold;font-style:normal;font-family:'Liberation Sans',sans-serif;transform:scaleX(0.8607);">Indicador</span>
<div class="b" style="left:357.00px;top:443.00px;width:291.00px;height:1.00px;background:#d6d6d6;"></div>
<div class="b" style="left:647.00px;top:405.00px;width:1.00px;height:39.00px;background:#d6d6d6;"></div>
<span class="t" style="left:371.88px;top:378.15px;font-size:14.83px;line-height:14.83px;color:#262626;font-weight:normal;font-style:normal;font-family:'Liberation Sans',sans-serif;transform:scaleX(0.9187);">Problemas</span>
<span class="t" style="left:371.85px;top:416.75px;font-size:14.83px;line-height:14.83px;color:#262626;font-weight:normal;font-style:normal;font-family:'Liberation Sans',sans-serif;transform:scaleX(0.9483);">Numérico</span>
<div class="b" style="left:356.00px;top:364.00px;width:293.00px;height:41.00px;background:transparent;border:2px solid #256c47;box-sizing:border-box;"></div>
<div class="b" style="left:646.00px;top:402.00px;width:5.00px;height:5.00px;background:#256c47;border:1px solid #fff;box-sizing:border-box;"></div>
<div class="b" style="left:59.00px;top:465.00px;width:53.00px;height:35.00px;background:#d9d9d9;"></div>
<div class="b" style="left:115.00px;top:465.00px;width:241.00px;height:35.00px;background:#d9d9d9;"></div>
<div class="b" style="left:359.00px;top:465.00px;width:189.00px;height:36.00px;background:#d9d9d9;"></div>
<div class="b" style="left:551.00px;top:465.00px;width:95.00px;height:36.00px;background:#d9d9d9;"></div>
<span class="t" style="left:72.84px;top:476.70px;font-size:14.53px;line-height:14.53px;color:#3b3b3b;font-weight:bold;font-style:normal;font-family:'Liberation Sans',sans-serif;transform:scaleX(1.0053);">Item</span>
<span class="t" style="left:128.54px;top:476.70px;font-size:14.53px;line-height:14.53px;color:#3b3b3b;font-weight:bold;font-style:normal;font-family:'Liberation Sans',sans-serif;transform:scaleX(0.8980);">Item analisado</span>
<span class="t" style="left:372.15px;top:476.60px;font-size:14.53px;line-height:14.53px;color:#3b3b3b;font-weight:bold;font-style:normal;font-family:'Liberation Sans',sans-serif;transform:scaleX(0.8872);">Indicador</span>
<span class="t" style="left:564.08px;top:476.60px;font-size:14.53px;line-height:14.53px;color:#3b3b3b;font-weight:bold;font-style:normal;font-family:'Liberation Sans',sans-serif;transform:scaleX(0.9048);">% do total</span>
<div class="b" style="left:30.00px;top:502.00px;width:1548.00px;height:1.00px;background:#a3a3a3;"></div>
<div class="b" style="left:59.00px;top:504.00px;width:53.00px;height:36.00px;background:#d9d9d9;"></div>
<div class="b" style="left:550.00px;top:503.00px;width:98.00px;height:39.00px;background:#f2f2f2;"></div>
<div class="b" style="left:115.00px;top:541.00px;width:533.00px;height:1.00px;background:#d9d9d9;"></div>
<div class="b" style="left:357.00px;top:503.00px;width:1.00px;height:39.00px;background:#d9d9d9;"></div>
<div class="b" style="left:549.00px;top:503.00px;width:1.00px;height:39.00px;background:#dcdcdc;"></div>
<div class="b" style="left:647.00px;top:503.00px;width:1.00px;height:39.00px;background:#dcdcdc;"></div>
<span class="t" style="left:72.89px;top:515.20px;font-size:14.53px;line-height:14.53px;color:#3b3b3b;font-weight:bold;font-style:normal;font-family:'Liberation Sans',sans-serif;transform:scaleX(1.0053);">1</span>
<span class="t" style="left:128.59px;top:515.20px;font-size:14.53px;line-height:14.53px;color:#262626;font-weight:normal;font-style:normal;font-family:'Liberation Sans',sans-serif;transform:scaleX(0.9351);">Problema 01</span>
<span class="t" style="left:372.76px;top:515.20px;font-size:14.53px;line-height:14.53px;color:#262626;font-weight:normal;font-style:normal;font-family:'Liberation Sans',sans-serif;transform:scaleX(0.9351);">5000</span>
<span class="t" style="left:565.00px;top:515.20px;font-size:14.53px;line-height:14.53px;color:#262626;font-weight:normal;font-style:normal;font-family:'Liberation Sans',sans-serif;transform:scaleX(0.9351);">4,71%</span>
<div class="b" style="left:59.00px;top:543.00px;width:53.00px;height:36.00px;background:#d9d9d9;"></div>
<div class="b" style="left:550.00px;top:542.00px;width:98.00px;height:39.00px;background:#f2f2f2;"></div>
<div class="b" style="left:115.00px;top:580.00px;width:533.00px;height:1.00px;background:#d9d9d9;"></div>
<div class="b" style="left:357.00px;top:542.00px;width:1.00px;height:39.00px;background:#d9d9d9;"></div>
<div class="b" style="left:549.00px;top:542.00px;width:1.00px;height:39.00px;background:#dcdcdc;"></div>
<div class="b" style="left:647.00px;top:542.00px;width:1.00px;height:39.00px;background:#dcdcdc;"></div>
<span class="t" style="left:73.30px;top:554.33px;font-size:14.53px;line-height:14.53px;color:#3b3b3b;font-weight:bold;font-style:normal;font-family:'Liberation Sans',sans-serif;transform:scaleX(1.0053);">2</span>
<span class="t" style="left:128.59px;top:554.33px;font-size:14.53px;line-height:14.53px;color:#262626;font-weight:normal;font-style:normal;font-family:'Liberation Sans',sans-serif;transform:scaleX(0.9351);">Problema 02</span>
<span class="t" style="left:372.62px;top:554.33px;font-size:14.53px;line-height:14.53px;color:#262626;font-weight:normal;font-style:normal;font-family:'Liberation Sans',sans-serif;transform:scaleX(0.9351);">60</span>
<span class="t" style="left:564.78px;top:554.33px;font-size:14.53px;line-height:14.53px;color:#262626;font-weight:normal;font-style:normal;font-family:'Liberation Sans',sans-serif;transform:scaleX(0.9351);">0,06%</span>
<div class="b" style="left:59.00px;top:582.00px;width:53.00px;height:36.00px;background:#d9d9d9;"></div>
<div class="b" style="left:550.00px;top:581.00px;width:98.00px;height:39.00px;background:#f2f2f2;"></div>
<div class="b" style="left:115.00px;top:619.00px;width:533.00px;height:1.00px;background:#d9d9d9;"></div>
<div class="b" style="left:357.00px;top:581.00px;width:1.00px;height:39.00px;background:#d9d9d9;"></div>
<div class="b" style="left:549.00px;top:581.00px;width:1.00px;height:39.00px;background:#dcdcdc;"></div>
<div class="b" style="left:647.00px;top:581.00px;width:1.00px;height:39.00px;background:#dcdcdc;"></div>
<span class="t" style="left:73.48px;top:593.46px;font-size:14.53px;line-height:14.53px;color:#3b3b3b;font-weight:bold;font-style:normal;font-family:'Liberation Sans',sans-serif;transform:scaleX(1.0053);">3</span>
<span class="t" style="left:128.59px;top:593.46px;font-size:14.53px;line-height:14.53px;color:#262626;font-weight:normal;font-style:normal;font-family:'Liberation Sans',sans-serif;transform:scaleX(0.9351);">Problema 03</span>
<span class="t" style="left:372.27px;top:593.46px;font-size:14.53px;line-height:14.53px;color:#262626;font-weight:normal;font-style:normal;font-family:'Liberation Sans',sans-serif;transform:scaleX(0.9351);">120</span>
<span class="t" style="left:564.78px;top:593.46px;font-size:14.53px;line-height:14.53px;color:#262626;font-weight:normal;font-style:normal;font-family:'Liberation Sans',sans-serif;transform:scaleX(0.9351);">0,11%</span>
<div class="b" style="left:59.00px;top:621.00px;width:53.00px;height:37.00px;background:#d9d9d9;"></div>
<div class="b" style="left:550.00px;top:620.00px;width:98.00px;height:39.00px;background:#f2f2f2;"></div>
<div class="b" style="left:115.00px;top:658.00px;width:533.00px;height:1.00px;background:#d9d9d9;"></div>
<div class="b" style="left:357.00px;top:620.00px;width:1.00px;height:39.00px;background:#d9d9d9;"></div>
<div class="b" style="left:549.00px;top:620.00px;width:1.00px;height:39.00px;background:#dcdcdc;"></div>
<div class="b" style="left:647.00px;top:620.00px;width:1.00px;height:39.00px;background:#dcdcdc;"></div>
<span class="t" style="left:73.60px;top:632.59px;font-size:14.53px;line-height:14.53px;color:#3b3b3b;font-weight:bold;font-style:normal;font-family:'Liberation Sans',sans-serif;transform:scaleX(1.0053);">4</span>
<span class="t" style="left:128.59px;top:632.59px;font-size:14.53px;line-height:14.53px;color:#262626;font-weight:normal;font-style:normal;font-family:'Liberation Sans',sans-serif;transform:scaleX(0.9351);">Problema 04</span>
<span class="t" style="left:372.78px;top:632.59px;font-size:14.53px;line-height:14.53px;color:#262626;font-weight:normal;font-style:normal;font-family:'Liberation Sans',sans-serif;transform:scaleX(0.9351);">300</span>
<span class="t" style="left:564.78px;top:632.59px;font-size:14.53px;line-height:14.53px;color:#262626;font-weight:normal;font-style:normal;font-family:'Liberation Sans',sans-serif;transform:scaleX(0.9351);">0,28%</span>
<div class="b" style="left:59.00px;top:661.00px;width:53.00px;height:36.00px;background:#d9d9d9;"></div>
<div class="b" style="left:550.00px;top:659.00px;width:98.00px;height:39.00px;background:#f2f2f2;"></div>
<div class="b" style="left:115.00px;top:697.00px;width:533.00px;height:1.00px;background:#d9d9d9;"></div>
<div class="b" style="left:357.00px;top:659.00px;width:1.00px;height:39.00px;background:#d9d9d9;"></div>
<div class="b" style="left:549.00px;top:659.00px;width:1.00px;height:39.00px;background:#dcdcdc;"></div>
<div class="b" style="left:647.00px;top:659.00px;width:1.00px;height:39.00px;background:#dcdcdc;"></div>
<span class="t" style="left:73.36px;top:671.72px;font-size:14.53px;line-height:14.53px;color:#3b3b3b;font-weight:bold;font-style:normal;font-family:'Liberation Sans',sans-serif;transform:scaleX(1.0053);">5</span>
<span class="t" style="left:128.59px;top:671.72px;font-size:14.53px;line-height:14.53px;color:#262626;font-weight:normal;font-style:normal;font-family:'Liberation Sans',sans-serif;transform:scaleX(0.9351);">Problema 05</span>
<span class="t" style="left:372.62px;top:671.72px;font-size:14.53px;line-height:14.53px;color:#262626;font-weight:normal;font-style:normal;font-family:'Liberation Sans',sans-serif;transform:scaleX(0.9351);">25000</span>
<span class="t" style="left:564.62px;top:671.72px;font-size:14.53px;line-height:14.53px;color:#262626;font-weight:normal;font-style:normal;font-family:'Liberation Sans',sans-serif;transform:scaleX(0.9351);">23,56%</span>
<div class="b" style="left:59.00px;top:700.00px;width:53.00px;height:36.00px;background:#d9d9d9;"></div>
<div class="b" style="left:550.00px;top:698.00px;width:98.00px;height:40.00px;background:#f2f2f2;"></div>
<div class="b" style="left:115.00px;top:736.00px;width:533.00px;height:1.00px;background:#d9d9d9;"></div>
<div class="b" style="left:357.00px;top:698.00px;width:1.00px;height:40.00px;background:#d9d9d9;"></div>
<div class="b" style="left:549.00px;top:698.00px;width:1.00px;height:40.00px;background:#dcdcdc;"></div>
<div class="b" style="left:647.00px;top:698.00px;width:1.00px;height:40.00px;background:#dcdcdc;"></div>
<span class="t" style="left:73.27px;top:710.85px;font-size:14.53px;line-height:14.53px;color:#3b3b3b;font-weight:bold;font-style:normal;font-family:'Liberation Sans',sans-serif;transform:scaleX(1.0053);">6</span>
<span class="t" style="left:128.59px;top:710.85px;font-size:14.53px;line-height:14.53px;color:#262626;font-weight:normal;font-style:normal;font-family:'Liberation Sans',sans-serif;transform:scaleX(0.9351);">Problema 06</span>
<span class="t" style="left:372.78px;top:710.85px;font-size:14.53px;line-height:14.53px;color:#262626;font-weight:normal;font-style:normal;font-family:'Liberation Sans',sans-serif;transform:scaleX(0.9351);">35000</span>
<span class="t" style="left:564.78px;top:710.85px;font-size:14.53px;line-height:14.53px;color:#262626;font-weight:normal;font-style:normal;font-family:'Liberation Sans',sans-serif;transform:scaleX(0.9351);">32,99%</span>
<div class="b" style="left:59.00px;top:739.00px;width:53.00px;height:36.00px;background:#d9d9d9;"></div>
<div class="b" style="left:550.00px;top:738.00px;width:98.00px;height:39.00px;background:#f2f2f2;"></div>
<div class="b" style="left:115.00px;top:775.00px;width:533.00px;height:1.00px;background:#d9d9d9;"></div>
<div class="b" style="left:357.00px;top:738.00px;width:1.00px;height:39.00px;background:#d9d9d9;"></div>
<div class="b" style="left:549.00px;top:738.00px;width:1.00px;height:39.00px;background:#dcdcdc;"></div>
<div class="b" style="left:647.00px;top:738.00px;width:1.00px;height:39.00px;background:#dcdcdc;"></div>
<span class="t" style="left:73.19px;top:749.98px;font-size:14.53px;line-height:14.53px;color:#3b3b3b;font-weight:bold;font-style:normal;font-family:'Liberation Sans',sans-serif;transform:scaleX(1.0053);">7</span>
<span class="t" style="left:128.59px;top:749.98px;font-size:14.53px;line-height:14.53px;color:#262626;font-weight:normal;font-style:normal;font-family:'Liberation Sans',sans-serif;transform:scaleX(0.9351);">Problema 07</span>
<span class="t" style="left:372.62px;top:749.98px;font-size:14.53px;line-height:14.53px;color:#262626;font-weight:normal;font-style:normal;font-family:'Liberation Sans',sans-serif;transform:scaleX(0.9351);">270</span>
<span class="t" style="left:564.78px;top:749.98px;font-size:14.53px;line-height:14.53px;color:#262626;font-weight:normal;font-style:normal;font-family:'Liberation Sans',sans-serif;transform:scaleX(0.9351);">0,25%</span>
<div class="b" style="left:59.00px;top:778.00px;width:53.00px;height:36.00px;background:#d9d9d9;"></div>
<div class="b" style="left:550.00px;top:777.00px;width:98.00px;height:39.00px;background:#f2f2f2;"></div>
<div class="b" style="left:115.00px;top:815.00px;width:533.00px;height:1.00px;background:#d9d9d9;"></div>
<div class="b" style="left:357.00px;top:777.00px;width:1.00px;height:39.00px;background:#d9d9d9;"></div>
<div class="b" style="left:549.00px;top:777.00px;width:1.00px;height:39.00px;background:#dcdcdc;"></div>
<div class="b" style="left:647.00px;top:777.00px;width:1.00px;height:39.00px;background:#dcdcdc;"></div>
<span class="t" style="left:73.33px;top:789.11px;font-size:14.53px;line-height:14.53px;color:#3b3b3b;font-weight:bold;font-style:normal;font-family:'Liberation Sans',sans-serif;transform:scaleX(1.0053);">8</span>
<span class="t" style="left:128.59px;top:789.11px;font-size:14.53px;line-height:14.53px;color:#262626;font-weight:normal;font-style:normal;font-family:'Liberation Sans',sans-serif;transform:scaleX(0.9351);">Problema 08</span>
<span class="t" style="left:372.62px;top:789.11px;font-size:14.53px;line-height:14.53px;color:#262626;font-weight:normal;font-style:normal;font-family:'Liberation Sans',sans-serif;transform:scaleX(0.9351);">265</span>
<span class="t" style="left:564.78px;top:789.11px;font-size:14.53px;line-height:14.53px;color:#262626;font-weight:normal;font-style:normal;font-family:'Liberation Sans',sans-serif;transform:scaleX(0.9351);">0,25%</span>
<div class="b" style="left:59.00px;top:817.00px;width:53.00px;height:10.00px;background:#d9d9d9;"></div>
<div class="b" style="left:550.00px;top:816.00px;width:98.00px;height:11.00px;background:#f2f2f2;"></div>
<div class="b" style="left:357.00px;top:816.00px;width:1.00px;height:11.00px;background:#d9d9d9;"></div>
<div class="b" style="left:549.00px;top:816.00px;width:1.00px;height:11.00px;background:#dcdcdc;"></div>
<div class="b" style="left:647.00px;top:816.00px;width:1.00px;height:11.00px;background:#dcdcdc;"></div>
<div class="b" style="left:2.00px;top:827.00px;width:1596.00px;height:35.00px;background:#ededed;"></div>
<div class="b" style="left:36.00px;top:835.00px;width:1546.00px;height:18.00px;background:#f6f6f6;border-radius:9px;"></div>
<div class="b" style="left:54.00px;top:839.00px;width:1044.00px;height:10.00px;background:#6f6f6f;border-radius:5px;"></div>
<svg class="s" style="left:40px;top:838px;" width="10" height="12" viewBox="0 0 10 12"><path d="M8.5 0.8 V10.6 L0.8 5.7 Z" fill="#6f6f6f"/></svg>
<svg class="s" style="left:1563px;top:838px;" width="10" height="12" viewBox="0 0 10 12"><path d="M1.2 0.8 V10.6 L8.9 5.7 Z" fill="#6f6f6f"/></svg>
<div class="b" style="left:16.8px;top:839.0px;width:2.6px;height:2.6px;background:#2b2b2b;border-radius:0.6px"></div>
<div class="b" style="left:16.8px;top:844.5px;width:2.6px;height:2.6px;background:#2b2b2b;border-radius:0.6px"></div>
<div class="b" style="left:16.8px;top:850.0px;width:2.6px;height:2.6px;background:#2b2b2b;border-radius:0.6px"></div>
<svg class="s" style="left:1583px;top:239px;" width="12" height="9" viewBox="0 0 12 9"><path d="M1.2 8 H10.8 L6 1 Z" fill="#6f6f6f"/></svg>
<div class="b" style="left:1584.00px;top:253.00px;width:10.00px;height:18.00px;background:#6f6f6f;border-radius:5px;"></div>
<svg class="s" style="left:1583px;top:815px;" width="12" height="9" viewBox="0 0 12 9"><path d="M1.2 1 H10.8 L6 8.2 Z" fill="#6f6f6f"/></svg>
<div class="b" style="left:2.00px;top:862.00px;width:1596.00px;height:1.00px;background:#d9d9d9;"></div>
<div class="b" style="left:2.00px;top:862.00px;width:1596.00px;height:22.00px;background:#f3f3f3;"></div>
<span class="t" style="left:12.65px;top:869.10px;font-size:11.34px;line-height:11.34px;color:#333333;font-weight:normal;font-style:normal;font-family:'Liberation Sans',sans-serif;transform:scaleX(1.0221);">Pronto</span>
<span class="t" style="left:123.46px;top:868.78px;font-size:11.48px;line-height:11.48px;color:#2b2b2b;font-weight:bold;font-style:normal;font-family:'Liberation Sans',sans-serif;transform:scaleX(0.9632);">Acessibilidade: investigar</span>
<div class="b" style="left:1270.00px;top:862.00px;width:43.00px;height:22.00px;background:#dadada;"></div>
<span class="t" style="left:1556.31px;top:869.20px;font-size:11.34px;line-height:11.34px;color:#333333;font-weight:normal;font-style:normal;font-family:'Liberation Sans',sans-serif;transform:scaleX(0.9464);">90%</span>
<div class="b" style="left:0.00px;top:53.00px;width:1.00px;height:833.00px;background:#1d6b3f;"></div>
<div class="b" style="left:1.00px;top:53.00px;width:1.00px;height:833.00px;background:#d8f3e2;"></div>
<div class="b" style="left:1599.00px;top:53.00px;width:1.00px;height:833.00px;background:#1d6b3f;"></div>
<div class="b" style="left:1598.00px;top:53.00px;width:1.00px;height:833.00px;background:#d8f3e2;"></div>
<div class="b" style="left:0.00px;top:885.00px;width:1600.00px;height:1.00px;background:#1d6b3f;"></div>
<div class="b" style="left:2.00px;top:884.00px;width:1596.00px;height:1.00px;background:#d8f3e2;"></div>
<svg class="s" style="left:0;top:0" width="1600" height="886"><path d="M70.2 880.3 V867.5 H84.6 V873" fill="none" stroke="#444" stroke-width="1.1"/><rect x="70.2" y="867.5" width="14.4" height="2.6" fill="#888"/><line x1="72" y1="873" x2="75" y2="873" stroke="#555" stroke-width="1"/><line x1="72" y1="876" x2="75" y2="876" stroke="#555" stroke-width="1"/><circle cx="80.5" cy="876.7" r="4.4" fill="#fff" stroke="#333" stroke-width="1.2"/><circle cx="80.5" cy="876.7" r="1.9" fill="#222"/><circle cx="111.3" cy="867.3" r="1.9" fill="#f3f3f3" stroke="#333" stroke-width="1.1"/><path d="M105.2 868.2 Q105.2 866.8 106.5 867.4 L109.5 869.6 H113.2 L116.3 867.4 Q117.6 866.8 117.5 868.3 L114 871.5 V874 M109.8 871.5 V874.5 L107.5 879.5 Q106.8 881 108.5 880.6 L111 876.5" fill="none" stroke="#333" stroke-width="1.1" stroke-linejoin="round"/><path d="M112.8 875.2 L119.3 881.7 M119.3 875.2 L112.8 881.7" stroke="#333" stroke-width="1.1"/><g fill="none" stroke="#3a3a3a" stroke-width="1.2"><line x1="1284.6" y1="866.2" x2="1297.6" y2="866.2"/><line x1="1284.6" y1="866.2" x2="1284.6" y2="879.7"/><line x1="1284.6" y1="870.7" x2="1297.6" y2="870.7"/><line x1="1288.9299999999998" y1="866.2" x2="1288.9299999999998" y2="879.7"/><line x1="1284.6" y1="875.2" x2="1297.6" y2="875.2"/><line x1="1293.26" y1="866.2" x2="1293.26" y2="879.7"/><line x1="1284.6" y1="879.7" x2="1297.6" y2="879.7"/><line x1="1297.59" y1="866.2" x2="1297.59" y2="879.7"/><rect x="1327.5" y="866.3" width="14.2" height="13.4"/><rect x="1330.3" y="869" width="8.6" height="8"/><line x1="1331.5" y1="871" x2="1337.5" y2="871"/><line x1="1331.5" y1="873" x2="1337.5" y2="873"/><line x1="1331.5" y1="875" x2="1337.5" y2="875"/><rect x="1371" y="866.3" width="14.5" height="13.4"/><path d="M1375.5 866.3 V871.8 H1380.5 V866.3"/></g><line x1="1406.8" y1="873.5" x2="1414.3" y2="873.5" stroke="#444" stroke-width="1.2"/><line x1="1420.7" y1="874.2" x2="1528.7" y2="874.2" stroke="#6a6a6a" stroke-width="1"/><line x1="1474" y1="871" x2="1474" y2="877" stroke="#888" stroke-width="1"/><rect x="1466" y="868" width="5.7" height="11.2" fill="#555"/><g stroke="#444" stroke-width="1.2"><line x1="1534" y1="873.5" x2="1541.8" y2="873.5"/><line x1="1537.9" y1="869.6" x2="1537.9" y2="877.4"/></g></svg>
</body></html>
